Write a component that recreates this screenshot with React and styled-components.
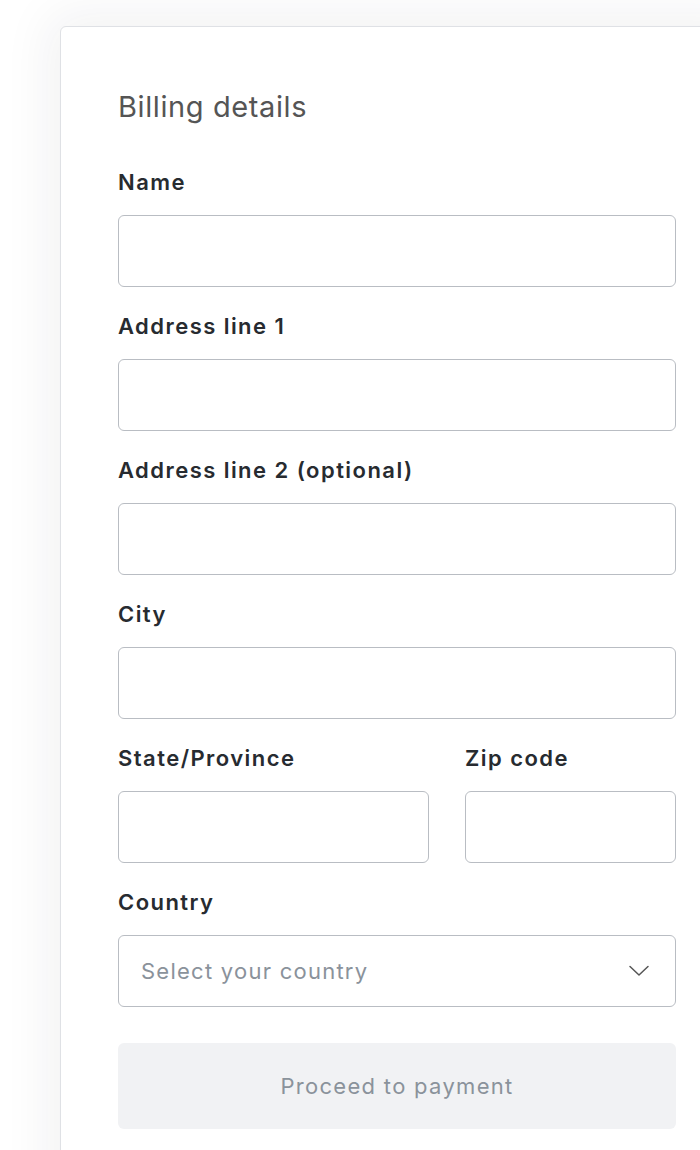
import React from "react";
import styled, { createGlobalStyle } from "styled-components";

const GlobalStyle = createGlobalStyle`
  html, body {
    margin: 0;
    padding: 0;
    background: #fff;
    overflow: hidden;
  }
  body {
    font-family: Inter, "Noto Sans", "Liberation Sans", sans-serif;
    -webkit-font-smoothing: antialiased;
  }
  * {
    box-sizing: border-box;
  }
`;

const Page = styled.div`
  width: 700px;
  height: 1150px;
  padding: 26px 0 0 60px;
  overflow: hidden;
`;

const Card = styled.form`
  width: 676px;
  min-height: 1200px;
  background: #fff;
  border: 1px solid #dfe1e5;
  border-radius: 6px;
  box-shadow: 0 0 50px 12px rgba(30, 40, 50, 0.06);
  padding: 63px 58px 0 57px;
`;

const Title = styled.h2`
  margin: 0 0 45px;
  font-size: 29px;
  line-height: 34px;
  font-weight: 400;
  color: #555;
  letter-spacing: 0.6px;
`;

const Fields = styled.div`
  display: flex;
  flex-direction: column;
  gap: 26px;
  width: 558px;
`;

const Row = styled.div`
  display: grid;
  grid-template-columns: 311px 211px;
  column-gap: 36px;
`;

const Field = styled.div`
  display: flex;
  flex-direction: column;
`;

const Label = styled.label`
  font-size: 22px;
  line-height: 26px;
  font-weight: 600;
  color: #272b30;
  letter-spacing: 1.45px;
  margin-bottom: 20px;
`;

const Input = styled.input`
  width: 100%;
  height: 72px;
  border: 1px solid #b9bdc3;
  border-radius: 6px;
  background: #fff;
  padding: 0 22px;
  font: inherit;
  font-size: 22px;
  outline: none;
`;

const SelectWrap = styled.div`
  position: relative;
  width: 100%;
`;

const Select = styled.select`
  appearance: none;
  -webkit-appearance: none;
  width: 100%;
  height: 72px;
  border: 1px solid #b9bdc3;
  border-radius: 6px;
  background: #fff;
  padding: 0 60px 0 22px;
  font-family: inherit;
  font-size: 22px;
  letter-spacing: 1.25px;
  color: #8a929b;
  outline: none;
`;

const Chevron = styled.svg`
  position: absolute;
  right: 26px;
  top: 50%;
  transform: translateY(-50%);
  pointer-events: none;
`;

const Button = styled.button`
  margin-top: 36px;
  width: 558px;
  height: 86px;
  border: none;
  border-radius: 6px;
  background: #f1f2f4;
  color: #8a929b;
  font-family: inherit;
  font-size: 22px;
  font-weight: 400;
  letter-spacing: 1.3px;
  cursor: not-allowed;
`;

export default function App() {
  return (
    <Page>
      <GlobalStyle />
      <Card onSubmit={(e) => e.preventDefault()}>
        <Title>Billing details</Title>
        <Fields>
          <Field>
            <Label>Name</Label>
            <Input type="text" />
          </Field>
          <Field>
            <Label>Address line 1</Label>
            <Input type="text" />
          </Field>
          <Field>
            <Label>Address line 2 (optional)</Label>
            <Input type="text" />
          </Field>
          <Field>
            <Label>City</Label>
            <Input type="text" />
          </Field>
          <Row>
            <Field>
              <Label>State/Province</Label>
              <Input type="text" />
            </Field>
            <Field>
              <Label>Zip code</Label>
              <Input type="text" />
            </Field>
          </Row>
          <Field>
            <Label>Country</Label>
            <SelectWrap>
              <Select defaultValue="">
                <option value="" disabled>
                  Select your country
                </option>
              </Select>
              <Chevron width="22" height="12" viewBox="0 0 22 12" fill="none">
                <path
                  d="M2 1.5L11 10L20 1.5"
                  stroke="#555"
                  strokeWidth="1.5"
                  strokeLinecap="round"
                  strokeLinejoin="round"
                />
              </Chevron>
            </SelectWrap>
          </Field>
        </Fields>
        <Button type="submit" disabled>
          Proceed to payment
        </Button>
      </Card>
    </Page>
  );
}
